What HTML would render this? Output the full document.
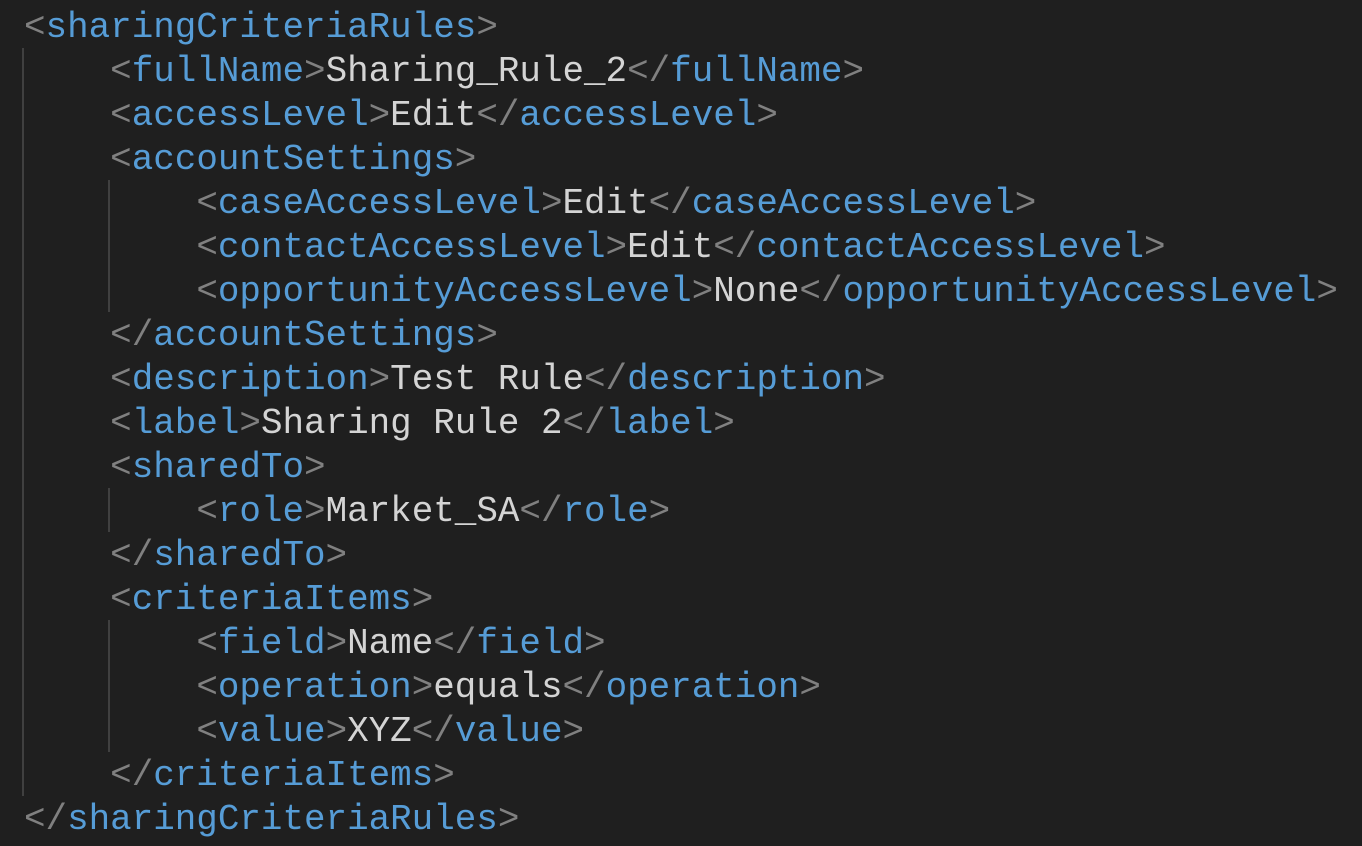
<!DOCTYPE html>
<html><head><meta charset="utf-8"><style>
html,body{margin:0;padding:0;background:#1f1f1f;width:1362px;height:846px;overflow:hidden}
pre{margin:0;position:absolute;left:24px;top:6px;font-family:"Liberation Mono",monospace;font-size:35.9px;line-height:44px;color:#d4d4d4}
.b{color:#808080}.t{color:#569cd6}
.g{position:absolute;width:2px;background:#404040}
</style></head><body>
<div class="g" style="left:22px;top:48px;height:748px"></div>
<div class="g" style="left:108px;top:180px;height:132px"></div>
<div class="g" style="left:108px;top:488px;height:44px"></div>
<div class="g" style="left:108px;top:620px;height:132px"></div>
<pre><span class="b">&lt;</span><span class="t">sharingCriteriaRules</span><span class="b">&gt;</span>
    <span class="b">&lt;</span><span class="t">fullName</span><span class="b">&gt;</span>Sharing_Rule_2<span class="b">&lt;/</span><span class="t">fullName</span><span class="b">&gt;</span>
    <span class="b">&lt;</span><span class="t">accessLevel</span><span class="b">&gt;</span>Edit<span class="b">&lt;/</span><span class="t">accessLevel</span><span class="b">&gt;</span>
    <span class="b">&lt;</span><span class="t">accountSettings</span><span class="b">&gt;</span>
        <span class="b">&lt;</span><span class="t">caseAccessLevel</span><span class="b">&gt;</span>Edit<span class="b">&lt;/</span><span class="t">caseAccessLevel</span><span class="b">&gt;</span>
        <span class="b">&lt;</span><span class="t">contactAccessLevel</span><span class="b">&gt;</span>Edit<span class="b">&lt;/</span><span class="t">contactAccessLevel</span><span class="b">&gt;</span>
        <span class="b">&lt;</span><span class="t">opportunityAccessLevel</span><span class="b">&gt;</span>None<span class="b">&lt;/</span><span class="t">opportunityAccessLevel</span><span class="b">&gt;</span>
    <span class="b">&lt;/</span><span class="t">accountSettings</span><span class="b">&gt;</span>
    <span class="b">&lt;</span><span class="t">description</span><span class="b">&gt;</span>Test Rule<span class="b">&lt;/</span><span class="t">description</span><span class="b">&gt;</span>
    <span class="b">&lt;</span><span class="t">label</span><span class="b">&gt;</span>Sharing Rule 2<span class="b">&lt;/</span><span class="t">label</span><span class="b">&gt;</span>
    <span class="b">&lt;</span><span class="t">sharedTo</span><span class="b">&gt;</span>
        <span class="b">&lt;</span><span class="t">role</span><span class="b">&gt;</span>Market_SA<span class="b">&lt;/</span><span class="t">role</span><span class="b">&gt;</span>
    <span class="b">&lt;/</span><span class="t">sharedTo</span><span class="b">&gt;</span>
    <span class="b">&lt;</span><span class="t">criteriaItems</span><span class="b">&gt;</span>
        <span class="b">&lt;</span><span class="t">field</span><span class="b">&gt;</span>Name<span class="b">&lt;/</span><span class="t">field</span><span class="b">&gt;</span>
        <span class="b">&lt;</span><span class="t">operation</span><span class="b">&gt;</span>equals<span class="b">&lt;/</span><span class="t">operation</span><span class="b">&gt;</span>
        <span class="b">&lt;</span><span class="t">value</span><span class="b">&gt;</span>XYZ<span class="b">&lt;/</span><span class="t">value</span><span class="b">&gt;</span>
    <span class="b">&lt;/</span><span class="t">criteriaItems</span><span class="b">&gt;</span>
<span class="b">&lt;/</span><span class="t">sharingCriteriaRules</span><span class="b">&gt;</span></pre>
</body></html>
